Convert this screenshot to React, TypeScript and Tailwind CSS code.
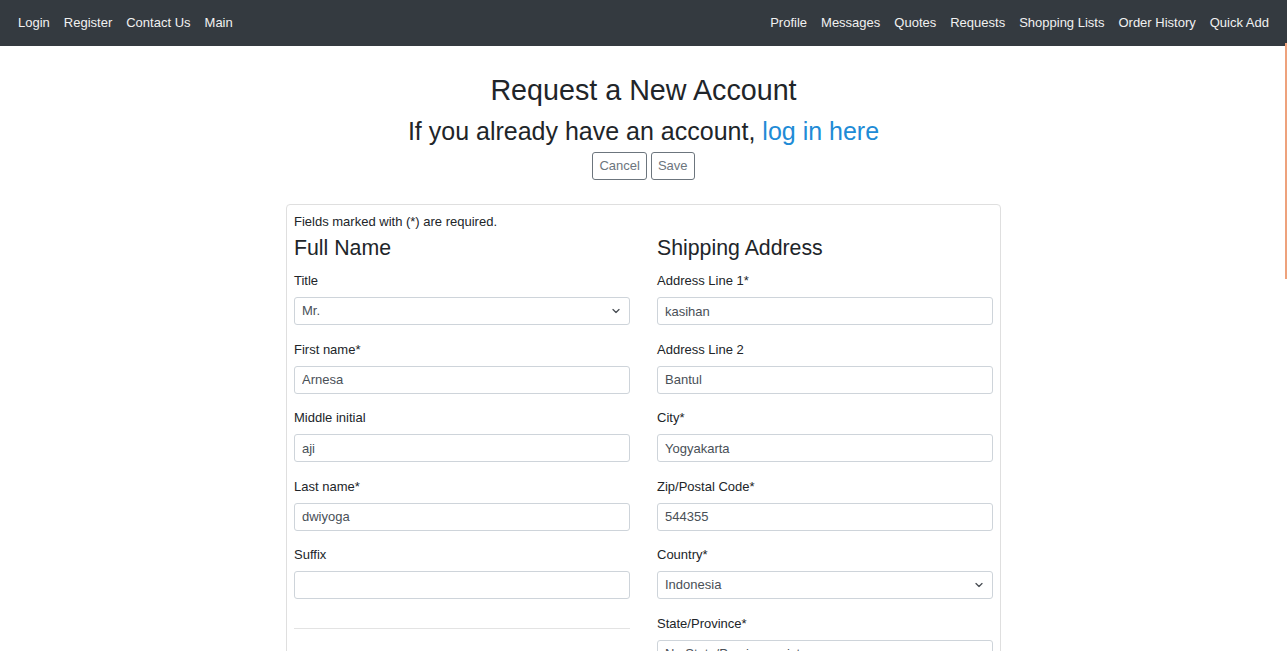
import React from "react";

const font = { fontFamily: '"Liberation Sans", Arial, sans-serif' };

function Chevron() {
  return (
    <svg
      className="pointer-events-none absolute right-[10px] top-1/2 -translate-y-1/2"
      width="8"
      height="5"
      viewBox="0 0 8 5"
      fill="none"
    >
      <path d="M1 1 L4 4 L7 1" stroke="#4a4f55" strokeWidth="1.3" strokeLinecap="round" strokeLinejoin="round" />
    </svg>
  );
}

function Field({ label, value, select }: { label: string; value: string; select?: boolean }) {
  return (
    <div className="flex flex-col">
      <label className="text-[13px] leading-[15px] text-[#212529]">{label}</label>
      <div className="relative mt-[9px] mb-[16.5px]">
        {select ? (
          <>
            <select
              className="h-[28px] w-full appearance-none rounded-[3px] border border-[#ced4da] bg-white pl-[7px] pr-[24px] text-[13px] text-[#495057] outline-none"
              style={font}
              defaultValue={value}
            >
              <option value={value}>{value}</option>
            </select>
            <Chevron />
          </>
        ) : (
          <input
            readOnly
            value={value}
            className="h-[28px] w-full rounded-[3px] border border-[#ced4da] bg-white px-[7px] text-[13px] text-[#495057] outline-none"
            style={font}
          />
        )}
      </div>
    </div>
  );
}

export default function App() {
  const leftNav = ["Login", "Register", "Contact Us", "Main"];
  const rightNav = ["Profile", "Messages", "Quotes", "Requests", "Shopping Lists", "Order History", "Quick Add"];
  return (
    <div className="relative h-[651px] overflow-hidden bg-white text-[#212529]" style={font}>
      <nav className="flex h-[46px] items-center justify-between bg-[#343a40] px-[11px]">
        <div className="flex">
          {leftNav.map((n) => (
            <a key={n} className="px-[7px] text-[13px] leading-[16px] text-[#f1f1f1]">
              {n}
            </a>
          ))}
        </div>
        <div className="flex">
          {rightNav.map((n) => (
            <a key={n} className="px-[7px] text-[13px] leading-[16px] text-[#f1f1f1]">
              {n}
            </a>
          ))}
        </div>
      </nav>
      <div className="absolute left-[1285px] top-[43px] h-[236px] w-[2px] bg-[#eea27c]" />

      <div className="flex flex-col items-center">
        <h1 className="mt-[27px] text-[28.7px] leading-[34px] text-[#212529]">Request a New Account</h1>
        <h2 className="mt-[10px] text-[25px] leading-[29px] text-[#212529]">
          If you already have an account, <a className="text-[#208bd6]">log in here</a>
        </h2>
        <div className="mt-[6px] flex gap-[4px]">
          <button className="h-[28px] rounded-[3px] border border-[#6c757d] px-[6px] text-[13px] text-[#6c757d]" style={font}>
            Cancel
          </button>
          <button className="h-[28px] rounded-[3px] border border-[#6c757d] px-[6px] text-[13px] text-[#6c757d]" style={font}>
            Save
          </button>
        </div>

        <div className="mt-[24px] w-[715px] rounded-[4px] border border-[#dfdfdf] px-[7px] pt-[9px] pb-[20px]">
          <p className="text-[13px] leading-[16px]">Fields marked with (*) are required.</p>
          <div className="mt-[5px] grid grid-cols-[336px_336px] gap-x-[27px]">
            <div className="flex flex-col">
              <h3 className="mb-[12px] text-[21.3px] leading-[26px]">Full Name</h3>
              <Field label="Title" value="Mr." select />
              <Field label="First name*" value="Arnesa" />
              <Field label="Middle initial" value="aji" />
              <Field label="Last name*" value="dwiyoga" />
              <Field label="Suffix" value="" />
              <div className="mt-[12.5px] h-px bg-[#e3e3e3]" />
            </div>
            <div className="flex flex-col">
              <h3 className="mb-[12px] text-[21.3px] leading-[26px]">Shipping Address</h3>
              <Field label="Address Line 1*" value="kasihan" />
              <Field label="Address Line 2" value="Bantul" />
              <Field label="City*" value="Yogyakarta" />
              <Field label="Zip/Postal Code*" value="544355" />
              <Field label="Country*" value="Indonesia" select />
              <Field label="State/Province*" value="No State/Province exists" />
            </div>
          </div>
        </div>
      </div>
    </div>
  );
}
